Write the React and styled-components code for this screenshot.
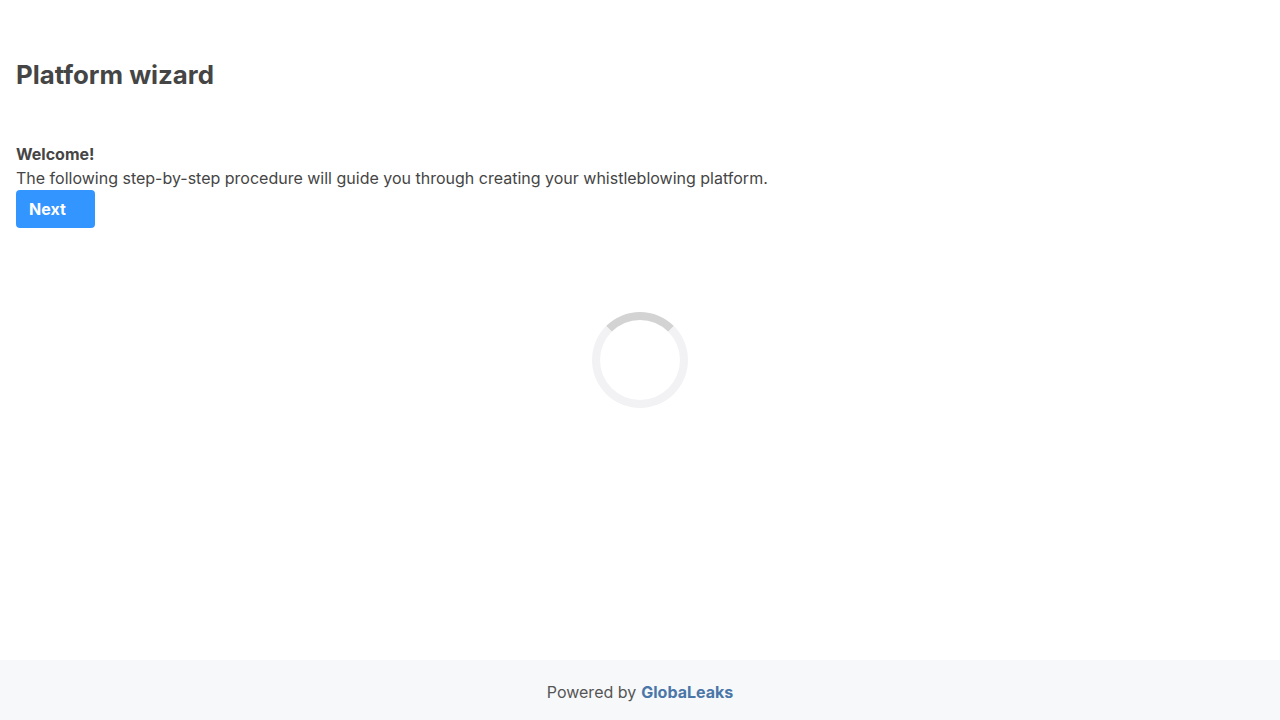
import React from "react";
import styled, { createGlobalStyle } from "styled-components";

const Global = createGlobalStyle`
  html, body { margin: 0; padding: 0; background: #fff; }
  body { font-family: Inter, "Noto Sans", sans-serif; color: #454545; font-size: 16px; }
`;

const Page = styled.div`
  display: flex;
  flex-direction: column;
  min-height: 720px;
`;

const Main = styled.main`
  flex: 1;
  display: flex;
  flex-direction: column;
  padding: 0 16px;
`;

const Title = styled.h1`
  margin: 58px 0 0;
  font-size: 25.8px;
  font-weight: 700;
  line-height: 34px;
  color: #454545;
`;

const Intro = styled.section`
  margin-top: 50px;
  display: flex;
  flex-direction: column;
  align-items: flex-start;
`;

const Strong = styled.div`
  font-weight: 700;
  line-height: 24px;
`;

const Text = styled.p`
  margin: 0;
  line-height: 24px;
`;

const Button = styled.button`
  font-family: inherit;
  font-size: 16px;
  font-weight: 700;
  color: #fff;
  background: #3395ff;
  border: none;
  border-radius: 4px;
  width: 79px;
  height: 38px;
  padding: 0 0 0 13px;
  text-align: left;
`;

const SpinnerWrap = styled.div`
  display: flex;
  justify-content: center;
  margin-top: 84px;
`;

const Spinner = styled.div`
  width: 80px;
  height: 80px;
  border-radius: 50%;
  border: 8px solid #f2f2f5;
  border-top-color: #d3d3d3;
`;

const Footer = styled.footer`
  height: 60px;
  box-sizing: border-box;
  padding-top: 4px;
  background: #f7f8fa;
  display: flex;
  align-items: center;
  justify-content: center;
  color: #555;
`;

const Brand = styled.a`
  color: #4a76a8;
  font-weight: 700;
  text-decoration: none;
  margin-left: 5px;
`;

export default function App() {
  return (
    <Page>
      <Global />
      <Main>
        <Title>Platform wizard</Title>
        <Intro>
          <Strong>Welcome!</Strong>
          <Text>The following step-by-step procedure will guide you through creating your whistleblowing platform.</Text>
          <Button>Next</Button>
        </Intro>
        <SpinnerWrap>
          <Spinner />
        </SpinnerWrap>
      </Main>
      <Footer>
        Powered by<Brand href="#">GlobaLeaks</Brand>
      </Footer>
    </Page>
  );
}
